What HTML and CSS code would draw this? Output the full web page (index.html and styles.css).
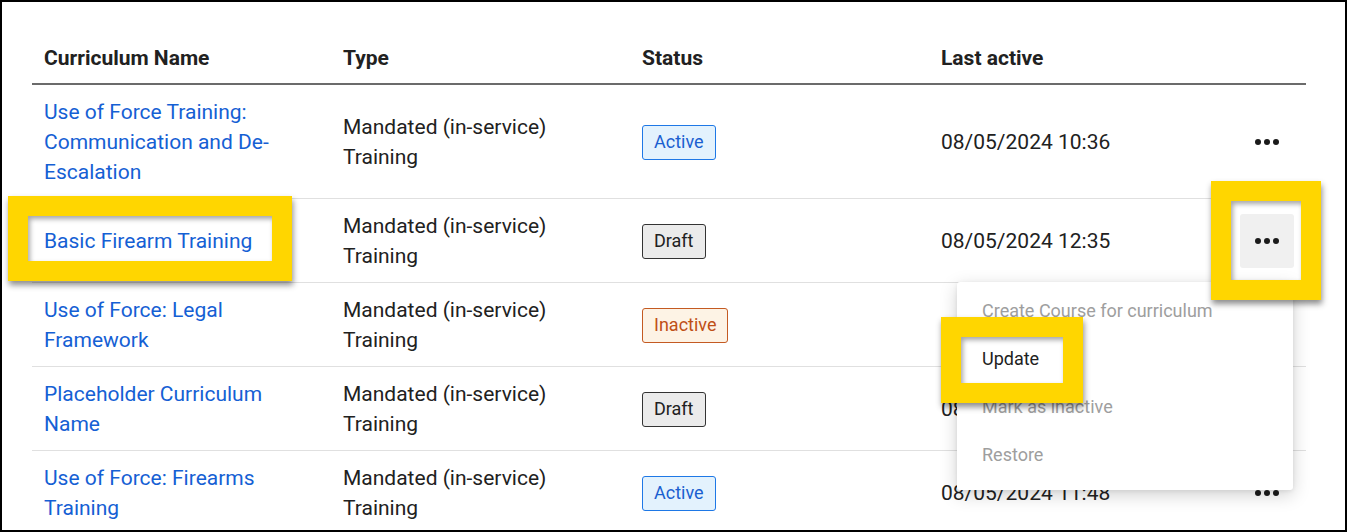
FILE: index.html
```html
<!DOCTYPE html>
<html lang="en">
<head>
    <meta charset="UTF-8">
    <meta name="viewport" content="width=device-width, initial-scale=1.0">
    <title>Curriculums</title>
    <link rel="stylesheet" href="styles.css">
</head>
<body>
    <div class="frame">
        <table class="grid">
            <colgroup>
                <col class="c-name">
                <col class="c-type">
                <col class="c-status">
                <col class="c-date">
                <col class="c-act">
            </colgroup>
            <thead>
                <tr>
                    <th>Curriculum Name</th>
                    <th>Type</th>
                    <th>Status</th>
                    <th>Last active</th>
                    <th></th>
                </tr>
            </thead>
            <tbody>
                <tr>
                    <td><a href="#">Use of Force Training: Communication and De-Escalation</a></td>
                    <td>Mandated (in-service) Training</td>
                    <td><span class="tag active">Active</span></td>
                    <td>08/05/2024 10:36</td>
                    <td class="act"><button class="more"><svg width="26" height="8" viewBox="0 0 26 8"><circle cx="4" cy="4" r="3"/><circle cx="13" cy="4" r="3"/><circle cx="22" cy="4" r="3"/></svg></button></td>
                </tr>
                <tr>
                    <td><a href="#">Basic Firearm Training</a></td>
                    <td>Mandated (in-service) Training</td>
                    <td><span class="tag draft">Draft</span></td>
                    <td>08/05/2024 12:35</td>
                    <td class="act"><button class="more open"><svg width="26" height="8" viewBox="0 0 26 8"><circle cx="4" cy="4" r="3"/><circle cx="13" cy="4" r="3"/><circle cx="22" cy="4" r="3"/></svg></button></td>
                </tr>
                <tr>
                    <td><a href="#">Use of Force: Legal Framework</a></td>
                    <td>Mandated (in-service) Training</td>
                    <td><span class="tag inactive">Inactive</span></td>
                    <td>08/05/2024 09:12</td>
                    <td class="act"><button class="more"><svg width="26" height="8" viewBox="0 0 26 8"><circle cx="4" cy="4" r="3"/><circle cx="13" cy="4" r="3"/><circle cx="22" cy="4" r="3"/></svg></button></td>
                </tr>
                <tr>
                    <td><a href="#">Placeholder Curriculum Name</a></td>
                    <td>Mandated (in-service) Training</td>
                    <td><span class="tag draft">Draft</span></td>
                    <td>08/05/2024 11:02</td>
                    <td class="act"><button class="more"><svg width="26" height="8" viewBox="0 0 26 8"><circle cx="4" cy="4" r="3"/><circle cx="13" cy="4" r="3"/><circle cx="22" cy="4" r="3"/></svg></button></td>
                </tr>
                <tr>
                    <td><a href="#">Use of Force: Firearms Training</a></td>
                    <td>Mandated (in-service) Training</td>
                    <td><span class="tag active">Active</span></td>
                    <td>08/05/2024 11:48</td>
                    <td class="act"><button class="more"><svg width="26" height="8" viewBox="0 0 26 8"><circle cx="4" cy="4" r="3"/><circle cx="13" cy="4" r="3"/><circle cx="22" cy="4" r="3"/></svg></button></td>
                </tr>
            </tbody>
        </table>

        <ul class="menu">
            <li class="off">Create Course for curriculum</li>
            <li>Update</li>
            <li class="off">Mark as inactive</li>
            <li class="off">Restore</li>
        </ul>

        <div class="mark mark-name"></div>
        <div class="mark mark-more"></div>
        <div class="mark mark-update"></div>
    </div>
</body>
</html>
```

FILE: styles.css
```css
*{
    margin: 0;
    padding: 0;
    box-sizing: border-box;
}
body{
    font-family: Roboto, "Liberation Sans", sans-serif;
    color: #212121;
    background: #fff;
}
.frame{
    position: relative;
    width: 1347px;
    height: 532px;
    border: 2px solid #000;
    padding: 29px 0 0 30px;
    overflow: hidden;
}
.grid{
    width: 1274px;
    border-collapse: collapse;
    table-layout: fixed;
    font-size: 21px;
    line-height: 30px;
}
.c-name, .c-type, .c-status, .c-date{
    width: 299px;
}
.c-act{
    width: 78px;
}
.grid th{
    text-align: left;
    font-weight: 700;
    font-size: 21px;
    padding: 12px 12px 10px;
    border-bottom: 2px solid #6b6b6b;
}
.grid td{
    padding: 12px 12px 11px;
    border-bottom: 1px solid #e0e0e0;
    vertical-align: middle;
}
.grid a{
    color: #1560d4;
    text-decoration: none;
}
.tag{
    display: inline-block;
    font-size: 18px;
    line-height: 27px;
    padding: 2px 11px 4px;
    border: 1px solid;
    border-radius: 3px;
}
.tag.active{
    color: #1a5fd0;
    background: #e3f2fd;
    border-color: #1e78e6;
}
.tag.draft{
    color: #212121;
    background: #ebebeb;
    border-color: #333;
}
.tag.inactive{
    color: #bf4f16;
    background: #fdf3e5;
    border-color: #c45a22;
}
.act{
    text-align: right;
}
.more{
    width: 54px;
    height: 54px;
    border: none;
    border-radius: 3px;
    background: transparent;
    display: inline-flex;
    align-items: center;
    justify-content: center;
    vertical-align: middle;
}
.more svg{
    fill: #1b1b1b;
}
.more.open{
    background: #f0f0f0;
}
.menu{
    position: absolute;
    left: 955px;
    top: 280px;
    width: 336px;
    height: 208px;
    list-style: none;
    background: #fff;
    padding: 5px 0;
    border-radius: 3px;
    box-shadow: 0 5px 18px rgba(0,0,0,.18), 0 1px 4px rgba(0,0,0,.08);
}
.menu li{
    height: 48px;
    line-height: 48px;
    padding: 0 25px;
    font-size: 18px;
    color: #212121;
}
.menu li.off{
    color: #9e9e9e;
}
.mark{
    position: absolute;
    border: 20px solid #ffd600;
    box-shadow: 1px 4px 6px rgba(0,0,0,.45), inset 2px 3px 5px rgba(0,0,0,.35);
}
.mark-name{
    left: 6px;
    top: 194px;
    width: 284px;
    height: 85px;
}
.mark-more{
    left: 1209px;
    top: 179px;
    width: 110px;
    height: 119px;
}
.mark-update{
    left: 939px;
    top: 315px;
    width: 142px;
    height: 86px;
}
```
